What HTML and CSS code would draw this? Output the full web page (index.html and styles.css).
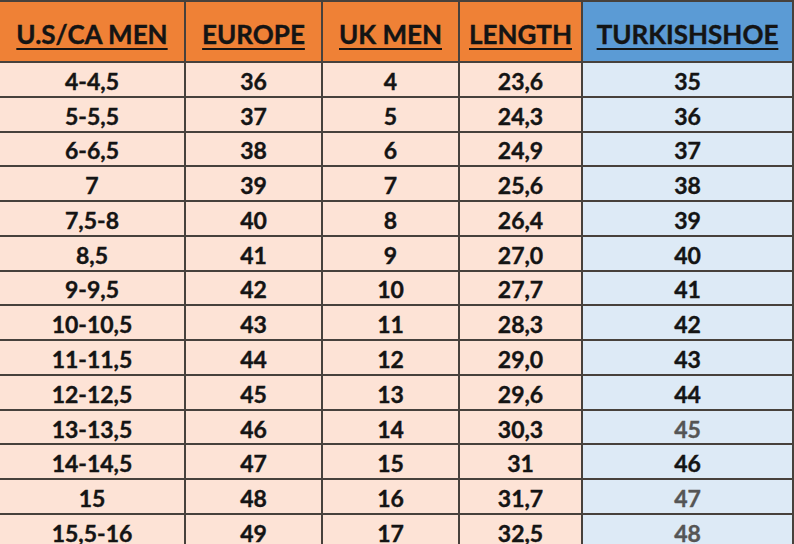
FILE: index.html
```html
<!DOCTYPE html>
<html>
<head>
<meta charset="utf-8">
<link rel="stylesheet" href="styles.css">
</head>
<body>
<div class="chart">
  <div class="h">U.S/CA MEN</div><div class="h">EUROPE</div><div class="h">UK MEN</div><div class="h">LENGTH</div><div class="h hb">TURKISHSHOE</div>
  <div class="c">4-4,5</div><div class="c">36</div><div class="c">4</div><div class="c">23,6</div><div class="c b">35</div>
  <div class="c">5-5,5</div><div class="c">37</div><div class="c">5</div><div class="c">24,3</div><div class="c b">36</div>
  <div class="c">6-6,5</div><div class="c">38</div><div class="c">6</div><div class="c">24,9</div><div class="c b">37</div>
  <div class="c">7</div><div class="c">39</div><div class="c">7</div><div class="c">25,6</div><div class="c b">38</div>
  <div class="c">7,5-8</div><div class="c">40</div><div class="c">8</div><div class="c">26,4</div><div class="c b">39</div>
  <div class="c">8,5</div><div class="c">41</div><div class="c">9</div><div class="c">27,0</div><div class="c b">40</div>
  <div class="c">9-9,5</div><div class="c">42</div><div class="c">10</div><div class="c">27,7</div><div class="c b">41</div>
  <div class="c">10-10,5</div><div class="c">43</div><div class="c">11</div><div class="c">28,3</div><div class="c b">42</div>
  <div class="c">11-11,5</div><div class="c">44</div><div class="c">12</div><div class="c">29,0</div><div class="c b">43</div>
  <div class="c">12-12,5</div><div class="c">45</div><div class="c">13</div><div class="c">29,6</div><div class="c b">44</div>
  <div class="c">13-13,5</div><div class="c">46</div><div class="c">14</div><div class="c">30,3</div><div class="c b g">45</div>
  <div class="c">14-14,5</div><div class="c">47</div><div class="c">15</div><div class="c">31</div><div class="c b">46</div>
  <div class="c">15</div><div class="c">48</div><div class="c">16</div><div class="c">31,7</div><div class="c b g">47</div>
  <div class="c">15,5-16</div><div class="c">49</div><div class="c">17</div><div class="c">32,5</div><div class="c b g">48</div>
</div>
</body>
</html>
```
FILE: styles.css
```css
html, body {
  margin: 0;
  padding: 0;
  background: #ffffff;
  overflow: hidden;
}
.chart {
  display: grid;
  grid-template-columns: 184px 135px 135px 121px 209px;
  grid-template-rows: 59px;
  grid-auto-rows: 32.77px;
  gap: 2px;
  padding: 2px 2px 2px 0;
  width: max-content;
  background: #47413c;
  font-family: Lato, "Open Sans", sans-serif;
  font-weight: 700;
  color: #141414;
  -webkit-text-stroke: 0.4px currentColor;
}
.h {
  background: #ef8136;
  display: flex;
  align-items: center;
  justify-content: center;
  font-size: 26px;
  text-decoration: underline;
  text-decoration-thickness: 2px;
  text-underline-offset: 4px;
  padding-top: 4px;
}
.hb {
  background: #5b9bd5;
}
.c {
  background: #fde3d6;
  display: flex;
  align-items: center;
  justify-content: center;
  font-size: 23px;
  padding-top: 3px;
}
.b {
  background: #ddeaf6;
}
.g {
  color: #555555;
}
```
